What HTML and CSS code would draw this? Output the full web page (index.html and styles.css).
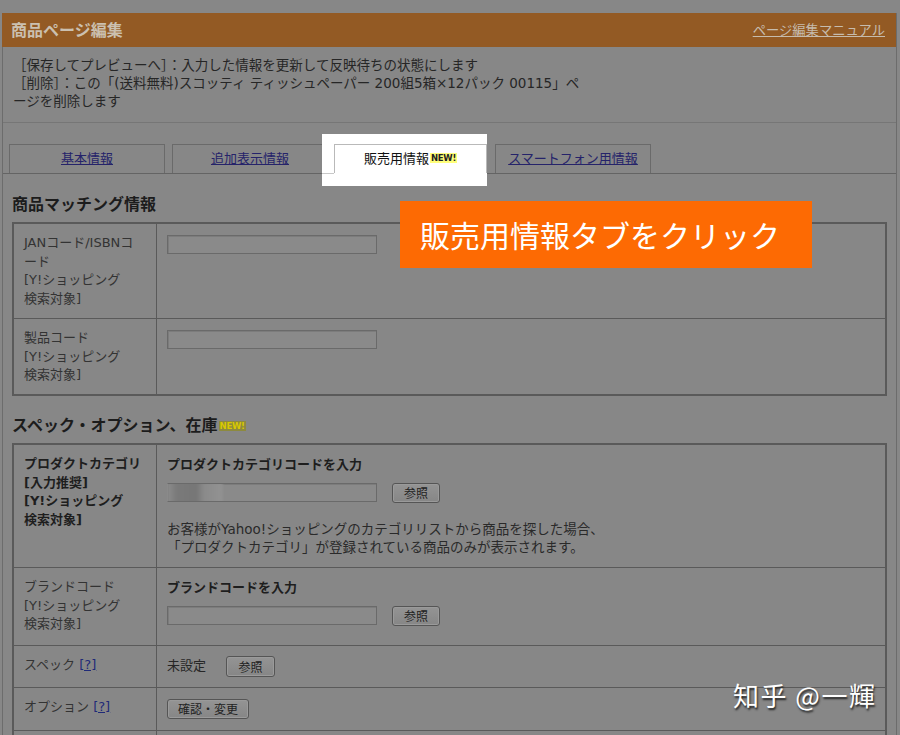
FILE: index.html
```html
<!DOCTYPE html>
<html lang="ja">
<head>
<meta charset="utf-8">
<title>商品ページ編集</title>
<link rel="stylesheet" href="styles.css">
</head>
<body>
<div class="page">
  <div class="panel">
    <div class="hdr">
      <span class="hdr-title">商品ページ編集</span>
      <a class="hdr-link" href="#">ページ編集マニュアル</a>
    </div>
    <div class="desc">
      ［保存してプレビューへ］：入力した情報を更新して反映待ちの状態にします<br>
      ［削除］：この「(送料無料)スコッティ ティッシュペーパー 200組5箱×12パック 00115」ペ<br>ージを削除します
    </div>
    <div class="tabs">
      <div class="tab"><a href="#">基本情報</a></div>
      <div class="tab"><a href="#">追加表示情報</a></div>
      <div class="hl"><div class="tab tab-active">販売用情報<span class="new">NEW!</span></div></div>
      <div class="tab tab-last"><a href="#">スマートフォン用情報</a></div>
    </div>
    <div class="content">
      <h2 class="sec">商品マッチング情報</h2>
      <table class="grid">
        <tr class="r1">
          <th>JANコード/ISBNコ<br>ード<br>[Y!ショッピング<br>検索対象]</th>
          <td><span class="field"></span></td>
        </tr>
        <tr class="r2">
          <th>製品コード<br>[Y!ショッピング<br>検索対象]</th>
          <td><span class="field"></span></td>
        </tr>
      </table>
      <h2 class="sec sec2">スペック・オプション、在庫<span class="new new-dim">NEW!</span></h2>
      <table class="grid">
        <tr class="r3">
          <th class="bold">プロダクトカテゴリ<br>[入力推奨]<br>[Y!ショッピング<br>検索対象]</th>
          <td>
            <div class="clabel">プロダクトカテゴリコードを入力</div>
            <div class="frow"><span class="field field-blur"><span class="blur"></span></span><button class="btn btn-ref">参照</button></div>
            <p class="note">お客様がYahoo!ショッピングのカテゴリリストから商品を探した場合、<br>「プロダクトカテゴリ」が登録されている商品のみが表示されます。</p>
          </td>
        </tr>
        <tr class="r4">
          <th>ブランドコード<br>[Y!ショッピング<br>検索対象]</th>
          <td>
            <div class="clabel">ブランドコードを入力</div>
            <div class="frow"><span class="field"></span><button class="btn btn-ref">参照</button></div>
          </td>
        </tr>
        <tr class="r5">
          <th>スペック <a class="q" href="#">[?]</a></th>
          <td><div class="inline"><span>未設定</span><button class="btn">参照</button></div></td>
        </tr>
        <tr class="r6">
          <th>オプション <a class="q" href="#">[?]</a></th>
          <td><button class="btn">確認・変更</button></td>
        </tr>
        <tr class="r7">
          <th></th>
          <td></td>
        </tr>
      </table>
    </div>
  </div>
  <div class="callout">販売用情報タブをクリック</div>
  <div class="watermark">知乎 @一輝</div>
</div>
</body>
</html>
```
FILE: styles.css
```css
html, body {
  margin: 0;
  padding: 0;
  background: #878787;
  overflow: hidden;
}
body {
  font-family: "DejaVu Sans", "Noto Sans CJK JP", sans-serif;
  font-size: 13px;
  color: #262626;
}
.page {
  position: relative;
  padding: 13px 3px 0 2px;
  height: 722px;
}
.panel {
  border-left: 1px solid #6c6c6c;
  border-right: 1px solid #6c6c6c;
  height: 100%;
}
.hdr {
  height: 34px;
  background: #935a24;
  display: flex;
  align-items: center;
  justify-content: space-between;
  padding: 0 11px 2px 9px;
  box-sizing: border-box;
  margin-left: -1px;
  font-family: "Noto Sans CJK JP", sans-serif;
}
.hdr-title {
  font-weight: bold;
  font-size: 16px;
  color: #cbc0b0;
}
.hdr-link {
  color: #c6bcae;
  font-size: 13.3px;
  text-decoration: underline;
}
.desc {
  padding: 9px 10px 12px;
  line-height: 18px;
  font-size: 13.5px;
  border-bottom: 1px solid #767676;
  white-space: nowrap;
}
.tabs {
  display: flex;
  align-items: flex-end;
  padding: 21px 0 0 6px;
  gap: 7px;
  border-bottom: 1px solid #646464;
}
.tab {
  box-sizing: border-box;
  width: 156px;
  height: 29px;
  padding-bottom: 3px;
  border: 1px solid #6a6a6a;
  border-bottom: none;
  display: flex;
  align-items: center;
  justify-content: center;
  font-size: 13px;
  font-family: "Noto Sans CJK JP", sans-serif;
}
.tab a {
  color: #25236a;
  text-decoration: underline;
}
.hl {
  background: linear-gradient(#c8c8c8, #c8c8c8) no-repeat 0 39px / 12px 1px, #fff;
  padding: 10px 0 13px 12px;
  margin: -10px 1px -13px -13px;
}
.tab-active {
  width: 153px;
  border-color: #b9b9b9;
  color: #111;
  background: #fff;
}
.new {
  display: inline-block;
  font-family: "DejaVu Sans", sans-serif;
  font-size: 8.5px;
  font-weight: bold;
  line-height: 10px;
  background: #ffff7a;
  color: #222;
  padding: 0 1px;
  margin-left: 1px;
  vertical-align: 3px;
  letter-spacing: -0.3px;
}
.new-dim {
  background: #8d8a3e;
  color: #d8c800;
  vertical-align: 2px;
}
.content {
  padding: 19px 10px 0 9px;
}
.sec {
  margin: 0;
  font-family: "Noto Sans CJK JP", sans-serif;
  font-size: 16px;
  font-weight: bold;
  line-height: 20px;
  height: 20px;
  color: #1c1c1c;
}
.sec2 {
  margin-top: 18px;
}
.grid {
  width: 875px;
  border-collapse: collapse;
  margin-top: 9px;
  border: 2px solid #5a5a5a;
}
.grid th, .grid td {
  border: 1px solid #5a5a5a;
  vertical-align: top;
  text-align: left;
  padding: 10px 10px 0 10px;
  line-height: 18.5px;
  font-size: 13px;
}
.grid th {
  width: 122px;
  font-weight: normal;
  color: #333;
  white-space: nowrap;
}
.grid th.bold {
  font-weight: bold;
  color: #1e1e1e;
}
.r1 th { height: 84px; }
.r2 th { height: 65px; }
.r3 th { height: 112px; }
.r4 th { height: 67px; }
.r5 th { height: 31px; }
.r6 th { height: 32px; }
.r7 th { height: 30px; }
.field {
  display: inline-block;
  box-sizing: border-box;
  width: 210px;
  height: 19px;
  border: 1px solid #6a6a6a;
  box-shadow: inset 1px 1px 0 #7c7c7c;
  background: #8a8a8a;
  vertical-align: top;
  position: relative;
  overflow: hidden;
}
.r1 .field, .r2 .field {
  margin-top: 1px;
}
.field-blur {
  border-left-color: transparent;
}
.blur {
  position: absolute;
  left: 0;
  top: -2px;
  width: 55px;
  height: 22px;
  background: linear-gradient(90deg, #8b8b8b 0, #7a7a7a 8px, #767676 28px, #8a8a8a 36px, #929292 54px, #8a8a8a 55px);
  filter: blur(1.5px);
}
.clabel {
  font-family: "Noto Sans CJK JP", sans-serif;
  font-weight: bold;
  color: #1e1e1e;
}
.frow {
  display: flex;
  align-items: center;
  gap: 15px;
  margin-top: 9px;
}
.btn {
  font-family: "Noto Sans CJK JP", sans-serif;
  font-size: 12px;
  color: #222;
  height: 20px;
  padding: 0 10px;
  line-height: 18px;
  border: 1px solid #555;
  border-radius: 3px;
  background: linear-gradient(#949494, #868686);
  box-shadow: inset 0 0 0 1px #9a9a9a;
}
.btn-ref {
  width: 48px;
  padding: 0;
}
.note {
  margin: 17px 0 0;
  font-size: 13.5px;
  line-height: 18px;
  color: #2a2a2a;
  white-space: nowrap;
}
.inline {
  display: flex;
  align-items: center;
  gap: 20px;
}
.inline .btn {
  width: 49px;
  padding: 0;
  height: 21px;
  margin-top: 0;
}
.r5 td { padding-top: 10px; }
.r6 td { padding-top: 11px; }
.r6 .btn { width: 82px; padding: 0; }
.q {
  color: #1f2a78;
  text-decoration: underline;
}
.callout {
  position: absolute;
  left: 400px;
  top: 201px;
  width: 412px;
  height: 67px;
  box-sizing: border-box;
  background: #fd6a03;
  color: #fff;
  font-family: "Noto Sans CJK JP", sans-serif;
  font-size: 30px;
  line-height: 67px;
  padding-left: 20px;
  white-space: nowrap;
}
.watermark {
  position: absolute;
  left: 733px;
  top: 678px;
  color: #fff;
  font-family: "Noto Sans CJK SC", "Noto Sans CJK JP", sans-serif;
  font-size: 26px;
  letter-spacing: 1.5px;
  line-height: 34px;
  white-space: nowrap;
  text-shadow: 1px 2px 2px #222;
}
```
